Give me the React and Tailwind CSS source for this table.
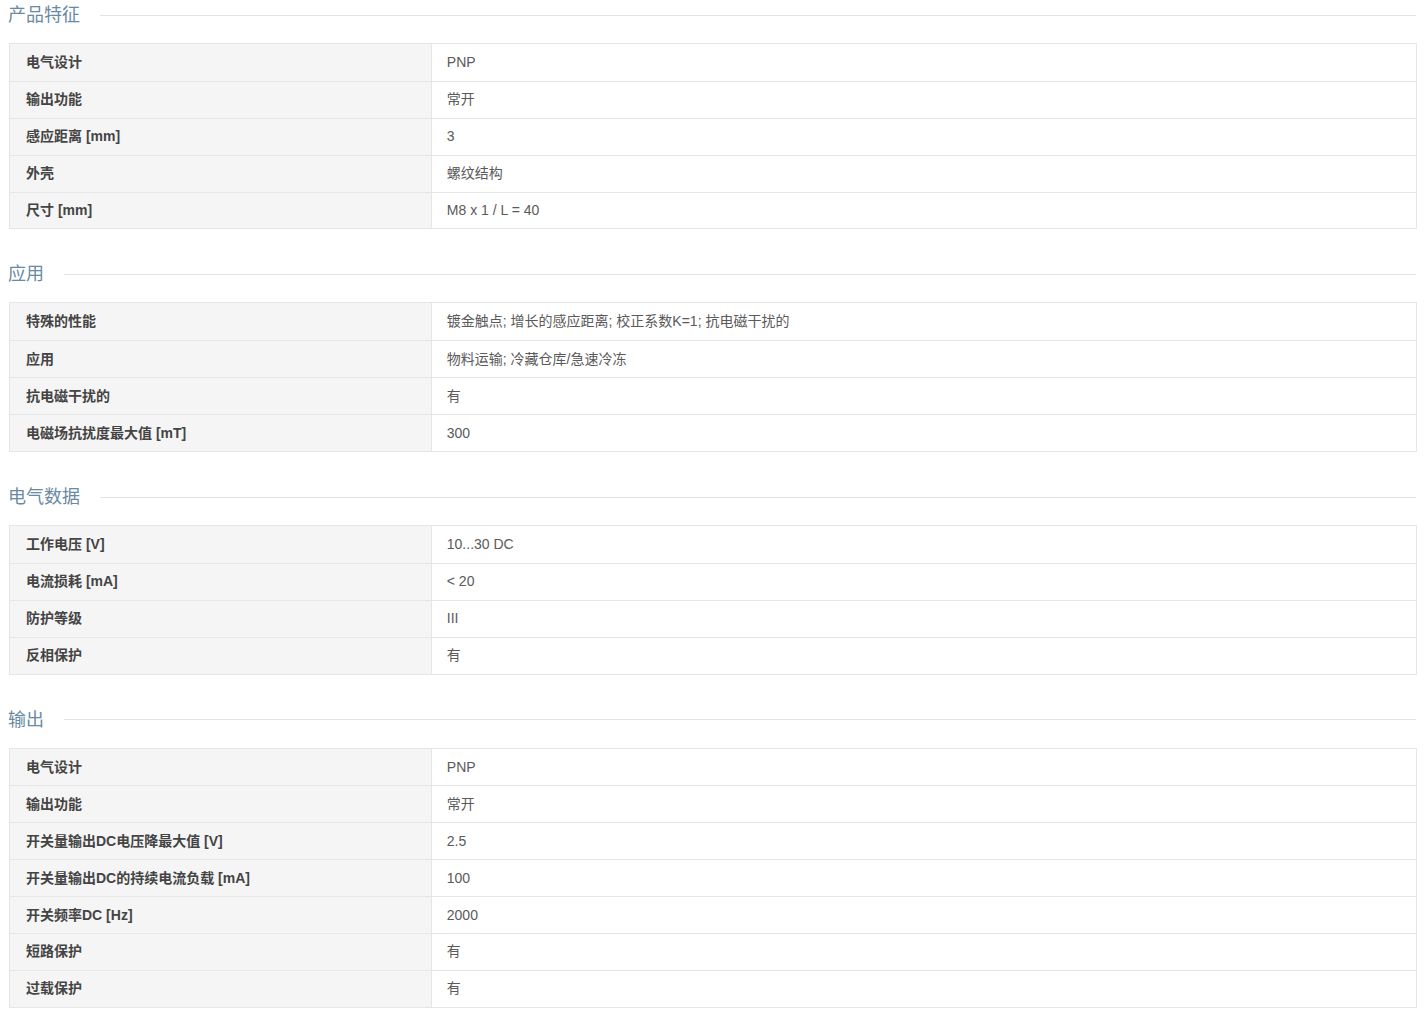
const sections = [
  {
    title: "产品特征",
    rows: [
      ["电气设计", "PNP"],
      ["输出功能", "常开"],
      ["感应距离 [mm]", "3"],
      ["外壳", "螺纹结构"],
      ["尺寸 [mm]", "M8 x 1 / L = 40"],
    ],
  },
  {
    title: "应用",
    rows: [
      ["特殊的性能", "镀金触点; 增长的感应距离; 校正系数K=1; 抗电磁干扰的"],
      ["应用", "物料运输; 冷藏仓库/急速冷冻"],
      ["抗电磁干扰的", "有"],
      ["电磁场抗扰度最大值 [mT]", "300"],
    ],
  },
  {
    title: "电气数据",
    rows: [
      ["工作电压 [V]", "10...30 DC"],
      ["电流损耗 [mA]", "< 20"],
      ["防护等级", "III"],
      ["反相保护", "有"],
    ],
  },
  {
    title: "输出",
    rows: [
      ["电气设计", "PNP"],
      ["输出功能", "常开"],
      ["开关量输出DC电压降最大值 [V]", "2.5"],
      ["开关量输出DC的持续电流负载 [mA]", "100"],
      ["开关频率DC [Hz]", "2000"],
      ["短路保护", "有"],
      ["过载保护", "有"],
    ],
  },
];

const Section = ({ title, rows }) => {
  return (
    <div className="mb-[30px]">
      <div className="flex items-center h-[30px] pl-[8px]">
        <span className="text-[18px] leading-[30px] text-[#6a89a2] font-normal">
          {title}
        </span>
        <div className="flex-1 ml-[20px] mr-[1px] h-px bg-[#e3e3e3]" />
      </div>
      <div className="mt-[13px] ml-[9px] border border-[#e6e6e6]">
        {rows.map(([label, value], i) => (
          <div
            key={i}
            className={
              "flex h-[36.9px] " + (i > 0 ? "border-t border-[#e6e6e6]" : "")
            }
          >
            <div className="w-[30%] bg-[#f5f5f5] border-r border-[#e6e6e6] flex items-center pl-[16px] text-[14px] font-bold text-[#444]">
              {label}
            </div>
            <div className="flex-1 bg-white flex items-center pl-[15px] text-[14px] text-[#5a5a5a]">
              {value}
            </div>
          </div>
        ))}
      </div>
    </div>
  );
};

const App = () => {
  return (
    <div
      className="w-[1426px] bg-white pr-[9px]"
      style={{
        fontFamily:
          '"Liberation Sans", Arial, "Noto Sans CJK SC", sans-serif',
      }}
    >
      {sections.map((s) => (
        <Section key={s.title} title={s.title} rows={s.rows} />
      ))}
    </div>
  );
};

export default App;
